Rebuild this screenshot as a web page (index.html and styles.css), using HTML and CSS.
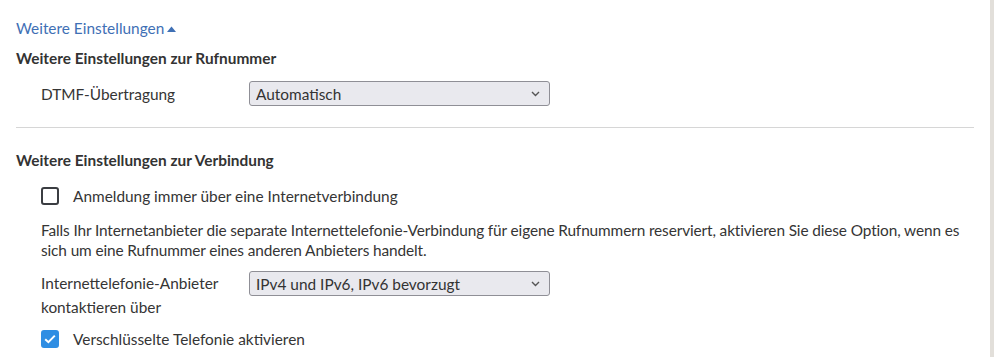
FILE: index.html
```html
<!DOCTYPE html>
<html lang="de">
<head>
    <meta charset="UTF-8">
    <title>Weitere Einstellungen</title>
    <link rel="stylesheet" href="styles.css">
</head>
<body>
    <div class="page">
        <div class="content">
            <a class="toggle" href="#">Weitere Einstellungen<svg class="caret" width="9" height="6" viewBox="0 0 9 6"><path d="M0 6 L4.5 0.5 L9 6 Z" fill="#3f70b5"/></svg></a>

            <h4>Weitere Einstellungen zur Rufnummer</h4>
            <div class="row">
                <label class="row-label" for="dtmf">DTMF-Übertragung</label>
                <div class="select-wrap">
                    <select id="dtmf">
                        <option>Automatisch</option>
                    </select>
                    <svg class="chevron" width="9" height="6" viewBox="0 0 9 6"><path d="M1 1 L4.5 4.5 L8 1" fill="none" stroke="#555" stroke-width="1.4"/></svg>
                </div>
            </div>

            <hr>

            <h4>Weitere Einstellungen zur Verbindung</h4>
            <div class="check">
                <span class="box"></span>
                <span>Anmeldung immer über eine Internetverbindung</span>
            </div>
            <p class="hint">Falls Ihr Internetanbieter die separate Internettelefonie-Verbindung für eigene Rufnummern reserviert, aktivieren Sie diese Option, wenn es sich um eine Rufnummer eines anderen Anbieters handelt.</p>
            <div class="row row-top">
                <label class="row-label" for="proto">Internettelefonie-Anbieter kontaktieren über</label>
                <div class="select-wrap">
                    <select id="proto">
                        <option>IPv4 und IPv6, IPv6 bevorzugt</option>
                    </select>
                    <svg class="chevron" width="9" height="6" viewBox="0 0 9 6"><path d="M1 1 L4.5 4.5 L8 1" fill="none" stroke="#555" stroke-width="1.4"/></svg>
                </div>
            </div>
            <div class="check">
                <span class="box checked">
                    <svg width="12" height="10" viewBox="0 0 12 10"><path d="M1.2 5.2 L4.4 8.2 L10.8 1.6" fill="none" stroke="#fff" stroke-width="2"/></svg>
                </span>
                <span>Verschlüsselte Telefonie aktivieren</span>
            </div>
        </div>
        <div class="edge"></div>
    </div>
</body>
</html>
```

FILE: styles.css
```css
/* Grundlayout */
body {
    margin: 0;
    font-family: "Source Sans Pro", Lato, "Liberation Sans", sans-serif;
    font-size: 15.4px;
    color: #353535;
    background: #fff;
}

.page {
    display: flex;
    height: 357px;
}

.content {
    flex: 1;
    padding: 18px 16px 0 16px;
}

.edge {
    width: 4px;
    background: #e2dfda;
}

.toggle {
    display: block;
    color: #3f70b5;
    text-decoration: none;
    line-height: 20px;
}

.caret {
    margin-left: 3px;
    vertical-align: 2px;
}

h4 {
    margin: 0;
    font-size: 15.4px;
    font-weight: bold;
    line-height: 20px;
    color: #333;
}

.toggle + h4 {
    margin-top: 10px;
}

.row {
    display: flex;
    align-items: center;
    padding-left: 25px;
    margin-top: 13px;
}

.row-label {
    width: 208px;
    line-height: 24px;
}

.row-top {
    align-items: flex-start;
    margin-top: 11px;
}

.select-wrap {
    position: relative;
}

select {
    appearance: none;
    -webkit-appearance: none;
    width: 301px;
    height: 25px;
    padding: 0 6px;
    font-family: inherit;
    font-size: 15.4px;
    color: #333;
    background: #e9e9ee;
    border: 1px solid #8f8f96;
    border-radius: 3px;
}

.chevron {
    position: absolute;
    right: 10px;
    top: 10px;
}

hr {
    border: none;
    border-top: 1px solid #d6d6d6;
    margin: 21px 0 0 0;
    width: 958px;
}

hr + h4 {
    margin-top: 22px;
}

.check {
    display: flex;
    align-items: center;
    gap: 14px;
    padding-left: 25px;
    margin-top: 16px;
    line-height: 20px;
}

.box {
    width: 14px;
    height: 14px;
    border: 2px solid #3b3d42;
    border-radius: 3px;
    display: flex;
    align-items: center;
    justify-content: center;
}

.box.checked {
    background: #2f8ee3;
    border-color: #2f8ee3;
}

.hint {
    margin: 14px 0 0 0;
    padding-left: 25px;
    line-height: 20px;
    letter-spacing: -0.12px;
}

.row-top + .check {
    margin-top: 10px;
}
```
